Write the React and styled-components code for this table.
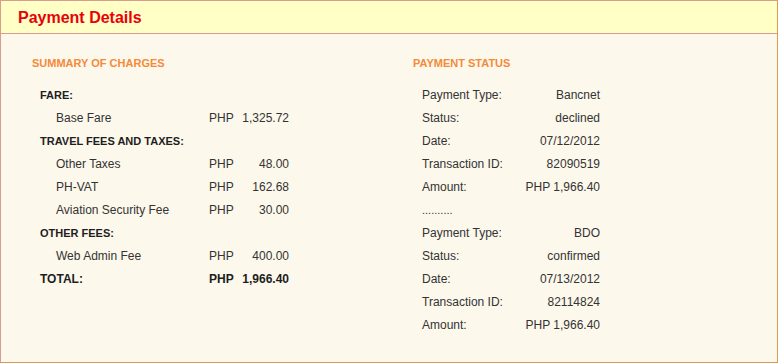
import React from "react";
import styled, { createGlobalStyle } from "styled-components";

const GlobalStyle = createGlobalStyle`
  html, body {
    margin: 0;
    padding: 0;
    background: #ffffff;
  }
  body {
    font-family: "Liberation Sans", Arial, sans-serif;
  }
`;

const charges = [
  { type: "group", label: "FARE:" },
  { type: "item", label: "Base Fare", amount: "1,325.72" },
  { type: "group", label: "TRAVEL FEES AND TAXES:" },
  { type: "item", label: "Other Taxes", amount: "48.00" },
  { type: "item", label: "PH-VAT", amount: "162.68" },
  { type: "item", label: "Aviation Security Fee", amount: "30.00" },
  { type: "group", label: "OTHER FEES:" },
  { type: "item", label: "Web Admin Fee", amount: "400.00" },
  { type: "total", label: "TOTAL:", amount: "1,966.40" },
];

const payments = [
  {
    type: "Bancnet",
    status: "declined",
    date: "07/12/2012",
    id: "82090519",
    amount: "PHP 1,966.40",
  },
  {
    type: "BDO",
    status: "confirmed",
    date: "07/13/2012",
    id: "82114824",
    amount: "PHP 1,966.40",
  },
];

function App() {
  return (
    <>
      <GlobalStyle />
      <Panel>
        <Header>Payment Details</Header>
        <Body>
          <Column>
            <SectionTitle>SUMMARY OF CHARGES</SectionTitle>
            <ChargeList>
              {charges.map((c, i) =>
                c.type === "group" ? (
                  <GroupLabel key={i}>{c.label}</GroupLabel>
                ) : (
                  <ChargeRow key={i} bold={c.type === "total"}>
                    <ChargeLabel indent={c.type === "item"}>{c.label}</ChargeLabel>
                    <span>PHP</span>
                    <Amount>{c.amount}</Amount>
                  </ChargeRow>
                )
              )}
            </ChargeList>
          </Column>
          <Column>
            <SectionTitle>PAYMENT STATUS</SectionTitle>
            <StatusList>
              {payments.map((p, i) => (
                <React.Fragment key={i}>
                  {i > 0 && <Divider>..........</Divider>}
                  <StatusRow>
                    <span>Payment Type:</span>
                    <Value>{p.type}</Value>
                  </StatusRow>
                  <StatusRow>
                    <span>Status:</span>
                    <Value>{p.status}</Value>
                  </StatusRow>
                  <StatusRow>
                    <span>Date:</span>
                    <Value>{p.date}</Value>
                  </StatusRow>
                  <StatusRow>
                    <span>Transaction ID:</span>
                    <Value>{p.id}</Value>
                  </StatusRow>
                  <StatusRow>
                    <span>Amount:</span>
                    <Value>{p.amount}</Value>
                  </StatusRow>
                </React.Fragment>
              ))}
            </StatusList>
          </Column>
        </Body>
      </Panel>
    </>
  );
}

const Panel = styled.div`
  width: 778px;
  box-sizing: border-box;
  border-top: 1px solid #d99c8e;
  border-left: 1px solid #d99c8e;
  border-right: 1px solid #dc9a58;
  border-bottom: 1px solid #dc9a58;
  background: #fdf8ec;
`;

const Header = styled.div`
  height: 33px;
  box-sizing: border-box;
  padding: 1px 0 0 17px;
  line-height: 31px;
  background: #ffffc6;
  border-bottom: 1px solid #d99c8e;
  color: #e8000a;
  font-size: 16px;
  font-weight: bold;
`;

const Body = styled.div`
  display: grid;
  grid-template-columns: 381px 1fr;
  padding: 23px 0 25px 31px;
`;

const Column = styled.div`
  display: flex;
  flex-direction: column;
`;

const SectionTitle = styled.div`
  color: #f48a3a;
  font-size: 11px;
  font-weight: bold;
  line-height: 13px;
  margin-bottom: 14px;
`;

const ChargeList = styled.div`
  display: flex;
  flex-direction: column;
  padding-left: 8px;
  width: 249px;
`;

const GroupLabel = styled.div`
  height: 23px;
  line-height: 23px;
  font-size: 11px;
  font-weight: bold;
  color: #1e1e1e;
`;

const ChargeRow = styled.div`
  display: grid;
  grid-template-columns: 169px 25px 1fr;
  height: 23px;
  line-height: 23px;
  font-size: ${(p) => (p.bold ? "11px" : "12px")};
  font-weight: ${(p) => (p.bold ? "bold" : "normal")};
  color: ${(p) => (p.bold ? "#1e1e1e" : "#333333")};
  & > span {
    font-size: 12px;
  }
`;

const ChargeLabel = styled.span`
  padding-left: ${(p) => (p.indent ? "16px" : "0")};
  white-space: nowrap;
`;

const Amount = styled.span`
  text-align: right;
`;

const StatusList = styled.div`
  display: flex;
  flex-direction: column;
  padding-left: 9px;
  width: 178px;
`;

const StatusRow = styled.div`
  display: flex;
  justify-content: space-between;
  height: 23px;
  line-height: 23px;
  font-size: 12px;
  color: #333333;
`;

const Value = styled.span`
  text-align: right;
`;

const Divider = styled.div`
  height: 23px;
  line-height: 23px;
  font-size: 11px;
  color: #333333;
`;

export default App;
